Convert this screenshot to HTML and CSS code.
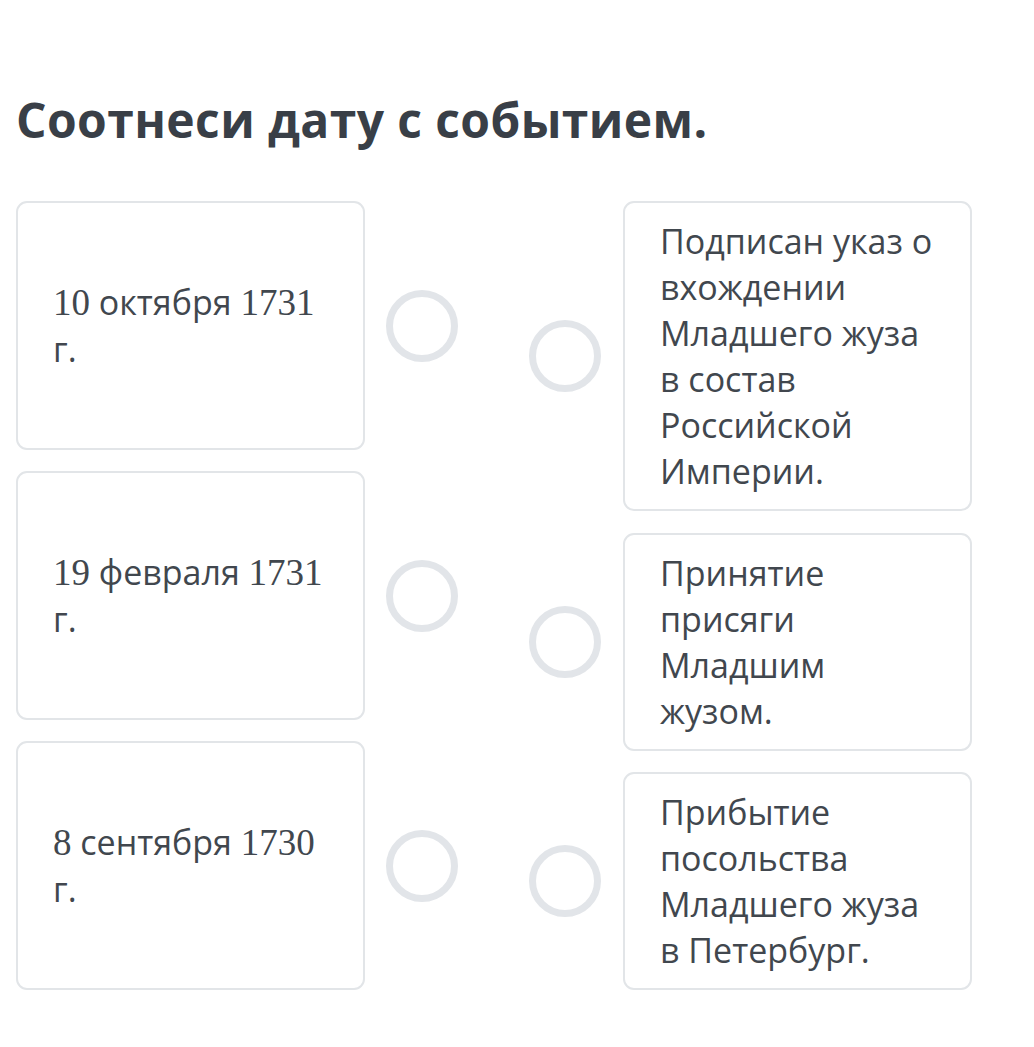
FILE: index.html
```html
<!DOCTYPE html>
<html lang="ru">
<head>
<meta charset="utf-8">
<title>Соотнеси дату с событием.</title>
<link rel="stylesheet" href="styles.css">
</head>
<body>
<main class="page">
  <h1 class="title">Соотнеси дату с событием.</h1>
  <div class="board">
    <div class="col col-left">
      <div class="row">
        <div class="card card-date"><p class="txt"><span class="num">10</span> октября <span class="num">1731</span> г.</p></div>
        <span class="dot dot-left"></span>
      </div>
      <div class="row">
        <div class="card card-date"><p class="txt"><span class="num">19</span> февраля <span class="num">1731</span> г.</p></div>
        <span class="dot dot-left"></span>
      </div>
      <div class="row">
        <div class="card card-date"><p class="txt"><span class="num">8</span> сентября <span class="num">1730</span> г.</p></div>
        <span class="dot dot-left"></span>
      </div>
    </div>
    <div class="col col-right">
      <div class="row">
        <span class="dot dot-right"></span>
        <div class="card card-event"><p class="txt">Подписан указ о вхождении Младшего жуза в состав Российской Империи.</p></div>
      </div>
      <div class="row">
        <span class="dot dot-right"></span>
        <div class="card card-event"><p class="txt">Принятие присяги Младшим жузом.</p></div>
      </div>
      <div class="row">
        <span class="dot dot-right"></span>
        <div class="card card-event"><p class="txt">Прибытие посольства Младшего жуза в Петербург.</p></div>
      </div>
    </div>
  </div>
</main>
</body>
</html>
```
FILE: styles.css
```css
* { box-sizing: border-box; }
html, body { margin: 0; padding: 0; background: #ffffff; }
body {
  font-family: "Open Sans", "Noto Sans", sans-serif;
  color: #40464d;
}
.page {
  padding: 87px 0 0 16px;
}
.title {
  margin: 0;
  font-size: 48px;
  line-height: 66px;
  font-weight: 700;
  color: #393f47;
  letter-spacing: 0.4px;
}
.board {
  margin-top: 48px;
  width: 956px;
  display: flex;
  justify-content: space-between;
}
.col {
  display: flex;
  flex-direction: column;
  gap: 21px;
}
.col-right { gap: 21.5px; }
.row {
  display: flex;
  align-items: center;
}
.card {
  width: 349px;
  border: 2px solid #e2e5e8;
  border-radius: 11px;
  background: #fff;
  padding: 15px 34px 15px 35px;
}
.card-date {
  height: 249px;
  display: flex;
  align-items: center;
}
.txt {
  margin: 0;
  font-size: 34px;
  line-height: 46px;
  color: #41474e;
}
.num {
  font-family: "Liberation Serif", "Times New Roman", serif;
  font-size: 37px;
}
.dot {
  width: 72px;
  height: 72px;
  border: 7px solid #e2e5e9;
  border-radius: 50%;
  flex: none;
}
.dot-left { margin-left: 21px; }
.dot-right { margin-right: 22px; }
```
